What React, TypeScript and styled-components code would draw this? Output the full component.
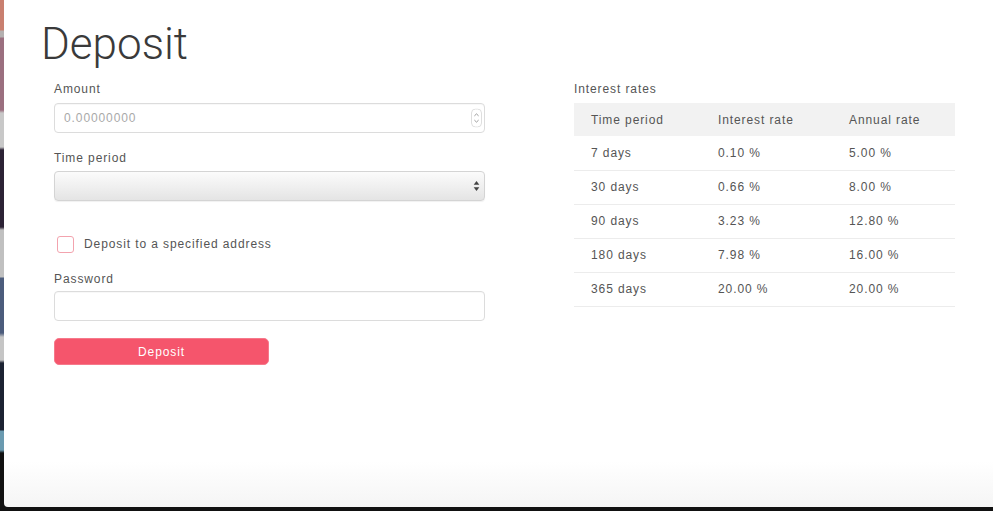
import React from 'react';
import styled, { createGlobalStyle } from 'styled-components';

const GlobalStyle = createGlobalStyle`
  html, body { margin: 0; padding: 0; background: #111; }
  body { font-family: "Liberation Sans", Arial, sans-serif; }
  * { box-sizing: border-box; }
`;

const Desktop = styled.div`
  width: 993px;
  height: 511px;
  display: flex;
  padding: 0 0 4px 4px;
  background: linear-gradient(
    to bottom,
    #c97f6f 0px, #c97f6f 30px,
    #b4b0b0 31px, #b4b0b0 37px,
    #9b6f7f 38px, #9b6f7f 110px,
    #c8c8c8 113px, #c8c8c8 147px,
    #2c2235 150px, #2c2235 227px,
    #c0c0c0 230px, #c0c0c0 277px,
    #4c5c7c 278px, #4c5c7c 333px,
    #c5c5c5 337px, #c5c5c5 360px,
    #1c2232 363px, #1c2232 430px,
    #6a9ab0 431px, #6a9ab0 450px,
    #111 453px, #111 511px
  );
`;

const Window = styled.div`
  flex: 1;
  display: flex;
  flex-direction: column;
  padding: 22px 0 0 50px;
  background: linear-gradient(to bottom, #fff 0%, #fff 91%, #f5f5f5 100%);
  border-bottom-left-radius: 4px;
`;

const Title = styled.h1`
  margin: 0 0 15px -13px;
  font-family: Roboto, "Liberation Sans", sans-serif;
  font-weight: 300;
  font-size: 44px;
  line-height: 45px;
  color: #3a3a3a;
`;

const Columns = styled.div`
  display: flex;
  align-items: flex-start;
  gap: 89px;
`;

const FormColumn = styled.div`
  width: 431px;
  display: flex;
  flex-direction: column;
`;

const RatesColumn = styled.div`
  width: 381px;
  display: flex;
  flex-direction: column;
`;

const Field = styled.div<{ $top: number; $gap: number }>`
  margin-top: ${p => p.$top}px;
  display: flex;
  flex-direction: column;
  gap: ${p => p.$gap}px;
`;

const Label = styled.label`
  display: block;
  font-size: 12px;
  line-height: 14px;
  letter-spacing: 0.9px;
  color: #555;
`;

const InputWrap = styled.div`
  position: relative;
`;

const TextInput = styled.input`
  width: 100%;
  height: 30px;
  border: 1px solid #dcdcdc;
  border-radius: 4px;
  padding: 0 9px;
  font-family: "Liberation Sans", Arial, sans-serif;
  font-size: 12px;
  letter-spacing: 0.9px;
  color: #333;
  background: #fff;
  box-shadow: inset 0 1px 1px rgba(0, 0, 0, 0.03);
  outline: none;
  &::placeholder { color: #a9a9a9; }
`;

const Select = styled.select`
  width: 100%;
  height: 30px;
  appearance: none;
  -webkit-appearance: none;
  border: 1px solid #d4d4d4;
  border-radius: 4px;
  padding: 0 9px;
  font-size: 12px;
  background: linear-gradient(to bottom, #fbfbfb 0%, #f0f0f0 50%, #e4e4e4 100%);
  box-shadow: 0 1px 1px rgba(0, 0, 0, 0.06);
  outline: none;
`;

const Overlay = styled.span<{ $right: number }>`
  position: absolute;
  right: ${p => p.$right}px;
  top: 50%;
  transform: translateY(-50%);
  display: flex;
  pointer-events: none;
`;

const CheckRow = styled.label`
  margin-top: 35px;
  display: flex;
  align-items: center;
  gap: 10px;
  padding-left: 3px;
  height: 17px;
  font-size: 12px;
  line-height: 15px;
  letter-spacing: 0.9px;
  color: #555;
`;

const CheckBox = styled.span`
  width: 17px;
  height: 17px;
  border: 1.5px solid #f3a3ae;
  border-radius: 3px;
  background: #fff;
`;

const Button = styled.button`
  margin-top: 17px;
  width: 215px;
  height: 27px;
  border: 1px solid #f6798b;
  border-radius: 5px;
  background: #f5556c;
  color: #fff;
  font-family: "Liberation Sans", Arial, sans-serif;
  font-size: 12px;
  letter-spacing: 0.9px;
  cursor: pointer;
`;

const RatesTable = styled.table`
  margin-top: 7px;
  width: 381px;
  border-collapse: collapse;
  table-layout: fixed;
  font-size: 12px;
  letter-spacing: 0.9px;
  color: #555;
`;

const HeadCell = styled.th`
  height: 33px;
  padding: 0 0 0 17px;
  text-align: left;
  font-weight: 400;
  background: #f2f2f2;
`;

const BodyRow = styled.tr`
  border-bottom: 1px solid #ececec;
`;

const Cell = styled.td`
  height: 34px;
  padding: 0 0 0 17px;
`;

const SpinnerIcon = () => (
  <svg width="11" height="19" viewBox="0 0 11 19">
    <rect x="0.5" y="0.5" width="10" height="18" rx="4" fill="#fff" stroke="#dedede" />
    <path d="M3.4 7.4 L5.5 5.4 L7.6 7.4" fill="none" stroke="#999" strokeWidth="1" />
    <path d="M3.4 11.6 L5.5 13.6 L7.6 11.6" fill="none" stroke="#999" strokeWidth="1" />
  </svg>
);

const SelectArrows = () => (
  <svg width="7" height="11" viewBox="0 0 7 11">
    <path d="M3.5 0.5 L6.3 4.3 L0.7 4.3 Z" fill="#444" />
    <path d="M3.5 10.5 L6.3 6.7 L0.7 6.7 Z" fill="#444" />
  </svg>
);

const rates = [
  ['7 days', '0.10 %', '5.00 %'],
  ['30 days', '0.66 %', '8.00 %'],
  ['90 days', '3.23 %', '12.80 %'],
  ['180 days', '7.98 %', '16.00 %'],
  ['365 days', '20.00 %', '20.00 %'],
];

export default function App() {
  return (
    <>
      <GlobalStyle />
      <Desktop>
        <Window>
          <Title>Deposit</Title>
          <Columns>
            <FormColumn>
              <Field $top={0} $gap={7}>
                <Label>Amount</Label>
                <InputWrap>
                  <TextInput placeholder="0.00000000" />
                  <Overlay $right={3}>
                    <SpinnerIcon />
                  </Overlay>
                </InputWrap>
              </Field>
              <Field $top={18} $gap={6}>
                <Label>Time period</Label>
                <InputWrap>
                  <Select defaultValue="" />
                  <Overlay $right={5}>
                    <SelectArrows />
                  </Overlay>
                </InputWrap>
              </Field>
              <CheckRow>
                <CheckBox />
                Deposit to a specified address
              </CheckRow>
              <Field $top={19} $gap={5}>
                <Label>Password</Label>
                <TextInput type="password" />
              </Field>
              <Button>Deposit</Button>
            </FormColumn>
            <RatesColumn>
              <Label>Interest rates</Label>
              <RatesTable>
                <colgroup>
                  <col style={{ width: 127 }} />
                  <col style={{ width: 131 }} />
                  <col />
                </colgroup>
                <thead>
                  <tr>
                    <HeadCell>Time period</HeadCell>
                    <HeadCell>Interest rate</HeadCell>
                    <HeadCell>Annual rate</HeadCell>
                  </tr>
                </thead>
                <tbody>
                  {rates.map(r => (
                    <BodyRow key={r[0]}>
                      <Cell>{r[0]}</Cell>
                      <Cell>{r[1]}</Cell>
                      <Cell>{r[2]}</Cell>
                    </BodyRow>
                  ))}
                </tbody>
              </RatesTable>
            </RatesColumn>
          </Columns>
        </Window>
      </Desktop>
    </>
  );
}
